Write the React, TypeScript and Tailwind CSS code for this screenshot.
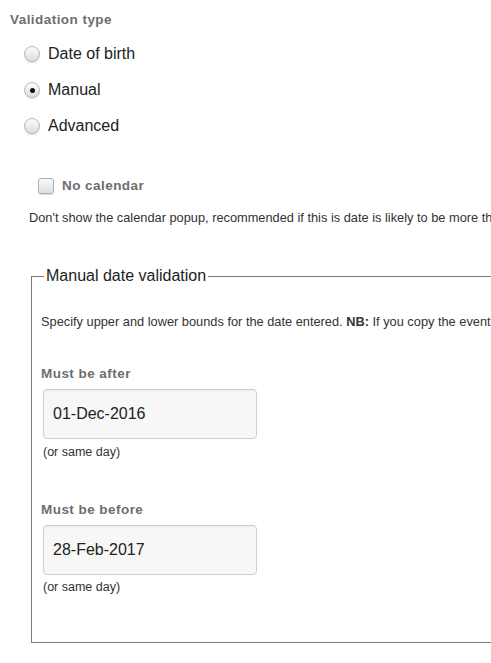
import React from "react";

// ── Small form controls ────────────────────────────────────────────────────
function Radio({ checked }: { checked?: boolean }) {
  return (
    <span className="relative flex h-[16px] w-[16px] shrink-0 items-center justify-center rounded-full border border-[#b8b8b8] bg-gradient-to-b from-[#fdfdfd] to-[#dcdcdc] shadow-[0_1px_1px_rgba(0,0,0,0.15)]">
      {checked && <span className="h-[5px] w-[5px] rounded-full bg-[#111]" />}
    </span>
  );
}

function Checkbox() {
  return (
    <span className="flex h-[16px] w-[16px] shrink-0 rounded-[3px] border border-[#b0b0b0] bg-gradient-to-b from-[#fbfbfb] to-[#dedede] shadow-[0_1px_1px_rgba(0,0,0,0.15)]" />
  );
}

function FieldLabel({ children }: { children: React.ReactNode }) {
  return (
    <div className="text-[13.5px] font-bold leading-[20px] tracking-[0.45px] text-[#6e6e6e]">
      {children}
    </div>
  );
}

function DateInput({ value }: { value: string }) {
  return (
    <div className="flex h-[50px] w-[214px] items-center rounded-[4px] border border-[#cfcfcf] bg-[#f7f7f7] pl-[9px] text-[16px] text-[#222] shadow-[inset_0_1px_1px_rgba(0,0,0,0.04)]">
      {value}
    </div>
  );
}

const options = [
  { label: "Date of birth", checked: false },
  { label: "Manual", checked: true },
  { label: "Advanced", checked: false },
];

// ── Page ───────────────────────────────────────────────────────────────────
export default function App() {
  return (
    <div
      className="w-full min-h-[663px] overflow-hidden bg-white pt-[10px] text-[#222]"
      style={{ fontFamily: '"Liberation Sans", Arial, sans-serif' }}
    >
      <div className="pl-[10px]">
        <FieldLabel>Validation type</FieldLabel>
      </div>

      <div className="mt-[6px] flex flex-col pl-[24px]">
        {options.map((o) => (
          <label key={o.label} className="flex h-[36px] items-center gap-[8px] text-[16px]">
            <Radio checked={o.checked} />
            <span>{o.label}</span>
          </label>
        ))}
      </div>

      <div className="mt-[32px] flex h-[20px] items-center gap-[8px] pl-[38px]">
        <Checkbox />
        <FieldLabel>No calendar</FieldLabel>
      </div>

      <p className="mt-[13px] whitespace-nowrap pl-[29px] text-[12.8px] leading-[18px] text-[#333]">
        Don't show the calendar popup, recommended if this is date is likely to be more than a year in the past or future.
      </p>

      <fieldset className="ml-[31px] mt-[39px] w-[620px] border border-[#7b7b7b] pb-[47px] pl-[9px]">
        <legend className="ml-[3px] px-[2px] text-[16px] leading-[20px] text-[#222]">
          Manual date validation
        </legend>

        <p className="mt-[27px] whitespace-nowrap text-[12.8px] leading-[18px] text-[#333]">
          Specify upper and lower bounds for the date entered. <b>NB:</b> If you copy the event, these dates will be copied too.
        </p>

        <div className="mt-[33px]">
          <FieldLabel>Must be after</FieldLabel>
        </div>
        <div className="mt-[5px] pl-[2px]">
          <DateInput value="01-Dec-2016" />
        </div>
        <div className="mt-[5px] pl-[2px] text-[12.5px] leading-[16px] text-[#333]">(or same day)</div>

        <div className="mt-[40px]">
          <FieldLabel>Must be before</FieldLabel>
        </div>
        <div className="mt-[5px] pl-[2px]">
          <DateInput value="28-Feb-2017" />
        </div>
        <div className="mt-[4px] pl-[2px] text-[12.5px] leading-[16px] text-[#333]">(or same day)</div>
      </fieldset>
    </div>
  );
}
